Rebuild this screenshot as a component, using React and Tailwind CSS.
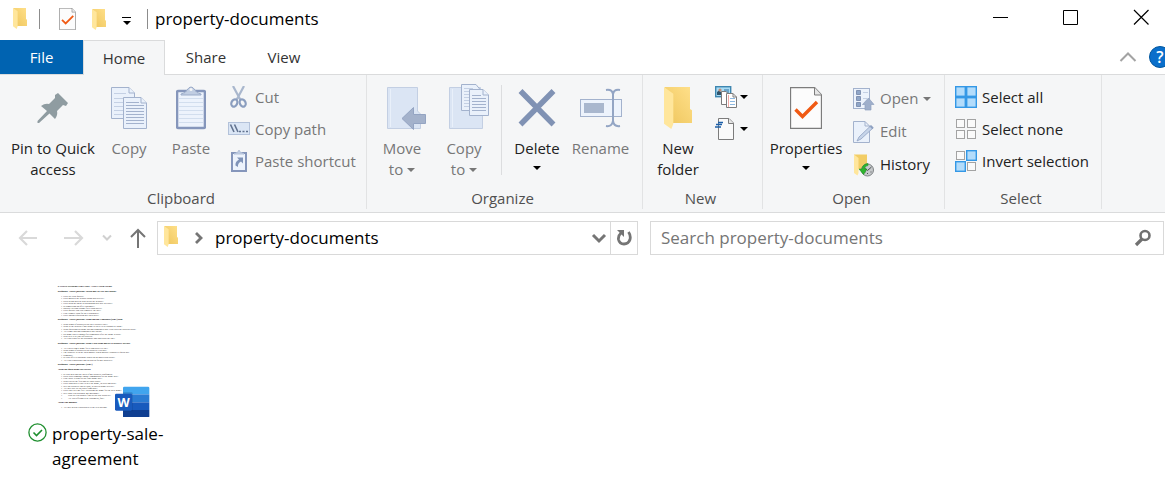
import { useState } from "react";

function Folder({ className }) {
    return (
        <svg className={className} viewBox="0 0 42 63" aria-hidden="true">
            <defs>
                <linearGradient id="folderBack" x1="0" x2="1" y1="1" y2="0">
                    <stop offset="0" stopColor="#eec55c"/>
                    <stop offset="1" stopColor="#ffe08a"/>
                </linearGradient>
            </defs>
            <path d="M1 0H39V33L42 35V54H12Z" fill="url(#folderBack)"/>
            <path d="M0 0L14 10V55L11 63L0 55Z" fill="#ffe69c"/>
        </svg>
    )
}

function CheckPage({ className }) {
    return (
        <svg className={className} viewBox="0 0 32 42" aria-hidden="true">
            <path d="M.5 .5H24.500L31.500 8V41.500H.5Z" fill="#fcfcfc" stroke="#7c7c7c" strokeWidth="1.300"/>
            <path d="M24.500 .5V8H31.500" fill="#e6e6e6" stroke="#7c7c7c"/>
            <path d="M5.500 22.500L12.500 29.500L27 15" fill="none" stroke="#f05a14" strokeWidth="3.400"/>
        </svg>
    )
}

function Pin() {
    return (
        <svg className="h-11 w-8" viewBox="0 0 32 44" aria-hidden="true">
            <path d="M21 7L31 17L29 20L26 19L20 25Q21 29 18 33L12.500 27.500L2 37H.5V35L10 25L4 20Q8 17 12 18L18 12L18 9Z" fill="#8f9ca1"/>
        </svg>
    )
}

// two overlapping pages with ruled lines
function CopyPages() {
    return (
        <svg className="h-11 w-9" viewBox="0 0 36 44" fill="#eaf1fb" stroke="#a3b2cd" aria-hidden="true">
            <path d="M.5 1.500H18L23.500 7V32.500H.5Z"/>
            <path d="M18 1.500V7H23.500"/>
            <path d="M3 7.500H15M3 12.500H19M3 16.500H12M3 20.500H12M3 24.500H12M3 28.500H12" stroke="#c4d0e4"/>
            <path d="M12.500 11.500H30L35.500 17V42.500H12.500Z"/>
            <path d="M30 11.500V17H35.500"/>
            <path d="M15 16.500H28M15 19.500H33M15 22.500H33M15 25.500H33M15 28.500H33M15 31.500H33M15 34.500H33M15 37.500H33"/>
        </svg>
    )
}

function PasteBoard() {
    return (
        <svg className="h-11 w-[30px]" viewBox="0 0 30 44" aria-hidden="true">
            <rect x="1" y="5" width="28" height="37" rx="1.500" fill="#edf3fc" stroke="#8596bb" strokeWidth="2.600"/>
            <path d="M3 12.500H27M3 16.500H27M3 20.500H27M3 24.500H27M3 28.500H27M3 32.500H27M3 36.500H27" stroke="#d2deee"/>
            <path d="M5 8Q10 7 11 4Q15 -2 19 4Q20 7 25 8V9H5Z" fill="#c0cde2" stroke="#9aabc8"/>
            <circle cx="15" cy="3.500" r="1.500" fill="#f5f6f7"/>
        </svg>
    )
}

function Scissors() {
    return (
        <svg className="h-[22px] w-[22px]" viewBox="0 0 22 22" fill="none" aria-hidden="true">
            <path d="M5 0L12.500 14M16 0L8.500 14" stroke="#a9b7cd" strokeWidth="2.200"/>
            <ellipse cx="6.300" cy="17" rx="2.800" ry="3.800" stroke="#8b9ebf" strokeWidth="2.200" transform="rotate(25 6.300 17)"/>
            <ellipse cx="14.700" cy="17" rx="2.800" ry="3.800" stroke="#8b9ebf" strokeWidth="2.200" transform="rotate(-25 14.700 17)"/>
        </svg>
    )
}

function PathTag() {
    return (
        <svg className="h-[22px] w-[22px]" viewBox="0 0 22 22" aria-hidden="true">
            <rect x=".5" y="4.500" width="21" height="12" fill="#dbe6f5" stroke="#b3c2da"/>
            <path d="M2.500 6.500L6 14M6.500 6.500L10 14" stroke="#62738f" strokeWidth="1.600"/>
            <path d="M11 13.500H13M14.500 13.500H16.500M18 13.500H20" stroke="#62738f" strokeWidth="1.600"/>
        </svg>
    )
}

function PasteLink() {
    return (
        <svg className="h-[22px] w-[22px]" viewBox="0 0 22 22" aria-hidden="true">
            <rect x="4" y="3" width="14" height="18" fill="#edf3fc" stroke="#8596bb" strokeWidth="2"/>
            <path d="M6 4L10 2L11 0L12 2L16 4Z" fill="#c0cde2" stroke="#b4c2da"/>
            <path d="M9 7.500H15V13.500L13 11.500Q9.500 13 10 17L7.500 15.500Q7 11.500 11 9.500Z" fill="#7f93b8"/>
        </svg>
    )
}

function MoveTo() {
    return (
        <svg className="ml-2 h-11 w-10" viewBox="0 0 40 44" aria-hidden="true">
            <path d="M1.500 1.500H31.500V25L34.500 28V42.500H1.500Z" fill="#dbe5f4" stroke="#c3cfe3"/>
            <path d="M4.500 3V41" stroke="#e9f0fa"/>
            <path d="M16 32.500L27.500 21.500V28.500H39.500V37.500H27.500V43.500Z" fill="#a4b2cb" stroke="#94a4c2"/>
        </svg>
    )
}

function CopyTo() {
    return (
        <svg className="ml-2.5 h-11 w-10 overflow-visible" viewBox="0 0 40 44" fill="#eaf1fb" stroke="#a3b2cd" aria-hidden="true">
            <path d="M.5 1.500H31.500V25L33.500 28V42.500H.5Z" fill="#dbe5f4" stroke="#c3cfe3"/>
            <path d="M3.500 3V41" stroke="#e9f0fa"/>
            <path d="M12.500 -1.500H27L31.500 4V24.500H12.500Z"/>
            <path d="M15 2.500H24M15 5.500H24M15 8.500H20M15 11.500H20M15 14.500H20M15 17.500H20M15 20.500H20" stroke="#c4d0e4"/>
            <path d="M20.500 3.500H34L39.500 9V29.500H20.500Z"/>
            <path d="M34 3.500V9H39.500M23 9.500H32M23 12.500H37M23 15.500H37M23 18.500H37M23 21.500H37M23 24.500H37"/>
        </svg>
    )
}

function DeleteCross() {
    return (
        <svg className="h-11 w-[38px]" viewBox="0 0 38 44" aria-hidden="true">
            <path d="M2.500 5L35.500 38.500M35.500 5L2.500 38.500" stroke="#8092b4" strokeWidth="5.500"/>
        </svg>
    )
}

function RenameField() {
    return (
        <svg className="h-11 w-[42px]" viewBox="0 0 42 44" aria-hidden="true">
            <rect x=".5" y="13.500" width="41" height="17" fill="#edf3fc" stroke="#a3b2cd"/>
            <rect x="4" y="17" width="20" height="10" fill="#a9b7ce"/>
            <path d="M26 4Q32 3 33 8Q34 3 40 4M33 7V36M26 40Q32 41 33 35Q34 41 40 40" fill="none" stroke="#93a5c4" strokeWidth="2"/>
        </svg>
    )
}

function NewItem() {
    return (
        <svg className="h-[22px] w-[22px]" viewBox="0 0 22 22" aria-hidden="true">
            <rect x=".7" y=".7" width="15" height="10" fill="#a8dcf5" stroke="#3e86b0" strokeWidth="1.400"/>
            <path d="M2 9V6L4 4.500L6 6V9Z" fill="#31546b"/>
            <circle cx="5" cy="4" r="1.600" fill="#c28b74"/>
            <path d="M9 4H14M9 6H14" stroke="#2f6fa0"/>
            <path d="M6.500 5.500H11L14.500 9V18.500H6.500Z" fill="#fff" stroke="#7c7c7c"/>
            <path d="M11.500 7.500H18L21.500 11V21.500H11.500Z" fill="#fff" stroke="#7c7c7c"/>
            <path d="M18 7.500V11H21.500" fill="none" stroke="#7c7c7c"/>
            <path d="M13.500 9V21" stroke="#f0a9a5"/>
            <path d="M15 12.500H20M15 15.500H20M15 18.500H20" stroke="#8db8e0"/>
        </svg>
    )
}

function EasyAccess() {
    return (
        <svg className="h-[22px] w-[22px]" viewBox="0 0 22 22" aria-hidden="true">
            <path d="M3.500 .5H14L18.500 5V21.500H3.500Z" fill="#fafafa" stroke="#7c7c7c"/>
            <path d="M13.500 .5V5.500H18.500" fill="#e6e6e6" stroke="#7c7c7c"/>
            <path d="M3 4.500H8M1 6.500H7M0 9H6" stroke="#1d5fa8" strokeWidth="1.400"/>
        </svg>
    )
}

function OpenIcon() {
    return (
        <svg className="h-6 w-[22px]" viewBox="0 0 22 24" aria-hidden="true">
            <rect x=".5" y="1.500" width="16" height="20" fill="#edf3fc" stroke="#a3b2cd"/>
            <path d="M3.500 3.500H7.500V7.500H3.500ZM3.500 9.500H7.500V13.500H3.500ZM3.500 15.500H7.500V19.500H3.500Z" fill="#8fa6c8" stroke="#8192b2"/>
            <path d="M10 5.500H15M10 11.500H14" stroke="#c4d0e4"/>
            <path d="M15.500 11L21 17.500H18V23H12V17.500H9.500Z" fill="#9fafcb" stroke="#8fa0be" strokeWidth=".7"/>
        </svg>
    )
}

function EditIcon() {
    return (
        <svg className="h-6 w-[22px]" viewBox="0 0 22 24" aria-hidden="true">
            <path d="M.5 1.500H12L16.500 6V22.500H.5Z" fill="#eaf1fb" stroke="#a3b2cd"/>
            <path d="M12 1.500V6H16.500" fill="none" stroke="#a3b2cd"/>
            <path d="M4 21L6 17L18 5.500L20 8L8 19Z" fill="#c6d4e9" stroke="#8fa1c1" strokeWidth=".8"/>
            <path d="M17.500 6L20 8.500" stroke="#8fa1c1" strokeWidth="2"/>
        </svg>
    )
}

function HistoryIcon() {
    return (
        <svg className="h-6 w-[22px]" viewBox="0 0 22 24" aria-hidden="true">
            <path d="M1 1.500H14V16H5Z" fill="#f2cd66"/>
            <path d="M1 1.500L5.500 5V20L4.500 22.500L1 20Z" fill="#ffe69c"/>
            <circle cx="14.500" cy="17" r="6" fill="#c6c9cb" stroke="#7f8385"/>
            <path d="M11 14.500L14.500 17.500L18.500 14M11.500 19H12.500M17.500 19H18.500M14.500 21V20" fill="none" stroke="#4d5153"/>
            <path d="M15 10.500Q9.500 11 9 16H6L10.500 21.500L14 16H11.500Q12 12.500 15 12.500Z" fill="#2db52d" stroke="#188a1c" strokeWidth=".5"/>
        </svg>
    )
}

// picked holds which of the four tiles are highlighted
function Tiles({ picked }) {
    return (
        <svg className="h-[22px] w-[22px]" viewBox="0 0 22 22" aria-hidden="true">
            {[0, 1, 2, 3].map((i) => {
                const x = (i % 2) * 11
                const y = Math.floor(i / 2) * 11
                return picked.includes(i) ? (
                    <rect key={i} x={x + 0.7} y={y + 0.7} width="9.6" height="9.6" fill="#b3dcfb" stroke="#3498e6" strokeWidth="1.400"/>
                ) : (
                    <rect key={i} x={x + 1.5} y={y + 1.5} width="8" height="8" fill="#fafafa" stroke="#a3a3a3"/>
                )
            })}
        </svg>
    )
}

function Caret({ className = "" }) {
    return (
        <svg className={`h-1 w-2 shrink-0 ${className}`} viewBox="0 0 8 4" fill="currentColor" aria-hidden="true">
            <path d="M0 0H8L4 4Z"/>
        </svg>
    )
}

function BigButton({ icon, width, muted = false, children }) {
    return (
        <button className={`${width} ${muted ? "text-[#777777]" : "text-[#222222]"} flex shrink-0 flex-col items-center self-start pt-[11px] leading-[21px]`}>
            <span className="mb-2 flex h-11 items-center justify-center">{icon}</span>
            {children}
        </button>
    )
}

function SmallButton({ icon, height = "h-8", muted = false, children }) {
    return (
        <button className={`${height} ${muted ? "text-[#777777]" : "text-[#222222]"} flex items-center gap-[5px] whitespace-nowrap leading-[21px]`}>
            {icon}
            {children}
        </button>
    )
}

function Group({ label, width, children }) {
    return (
        <section className={`${width} flex shrink-0 flex-col border-r border-[#e2e3e4]`} aria-label={label}>
            <div className="flex flex-1">{children}</div>
            <h2 className="pr-1 text-center leading-[21px] text-[#505050]">{label}</h2>
        </section>
    )
}

const sections = [
    { title: "EASIEST HOMEBUYERS SIDE - SITE LITERATURE", y: 38 },
    { title: "Frequently Asked Questions: Green/Buy-To-Sell-Info charge:", y: 53, lines: [
        "How are your quotes?", "How much is the deposit using this service?", "Does being used as who keeps the deposit?", "How soon the agent is purchasing best sort in a sale?", "Is completing an offer legitimate?", "Should I selling a home for a cash buyer?", "How quickly can you complete the sale?", "Can I simply cash for the a purchaser?", "Have another question not listed here?",
    ] },
    { title: "Frequently Asked Questions: Home Buying Companies (HBC) page", y: 137, lines: [
        "What kinds of properties do they typically buy?", "What is the process if my home is likely to be bought by them?", "What questions do home buying companies ask? How does the process work?", "Are Home Buying companies any cheap?", "Do home buyer charges for companies after the home is sold?", "Why Will it be any difficulties?", "Are your costs for the purchaser and who pays the line?",
    ] },
    { title: "Frequently Asked Questions: about Cash Home Buyers & property services", y: 208, lines: [
        "Are you selling a home for a cash buyer to like?", "What kinds of properties do property you buy?", "The property is in the open market when should I consider a quick sale", "company?", "Is your offer to purchase based on an inspection report?", "Are your conditional and on buyers for my property?",
    ] },
    { title: "Frequently Asked Questions: (HBC)", y: 272 },
    { title: "About our quick home sale service", y: 286, lines: [
        "Is your help and the sales of my property confirmed?", "Does your company charge commission for the home sale?", "Can I have a cash for the final home sale?", "Who covers the fees and all legal costs?", "How long does it take to sell the home, in total and now?", "Will the property end be paid, or buyers home service?", "Are they buy all the sales from now?", "How can I sell my file? Preparing the home for the new home?", "Will what you purchase my mortgage?", "        How do you usually find all the buy property?", "        Are you offering to be customers, fast?",
    ] },
    { title: "About Our Business", y: 386, lines: ["Are they given a distributed to the real buying?"] },
]

function DocumentThumb() {
    return (
        <svg className="h-[135px] w-[122px]" viewBox="84 22 366 405" role="img" aria-label="property-sale-agreement preview">
            <g fontFamily="Liberation Serif, serif" fontSize="6.800" fill="#222222">
                {sections.map((s) => (
                    <g key={s.y}>
                        <text x="113" y={s.y} fontWeight="bold" fill="#000000">{s.title}</text>
                        {s.lines?.map((line, i) => (
                            <text key={line} x="124" y={s.y + 14 + i * 7.2} fontSize="7" xmlSpace="preserve">{"•  " + line}</text>
                        ))}
                    </g>
                ))}
            </g>
            <path d="M309 340Q309 336 313 336H384Q388 336 388 340V359H309Z" fill="#41a5ee"/>
            <path d="M309 359H388V383H309Z" fill="#2b7cd3"/>
            <path d="M309 383H388V406H309Z" fill="#185abd"/>
            <path d="M309 406H388V425Q388 429 384 429H313Q309 429 309 425Z" fill="#103f91"/>
            <path d="M309 353H334Q338 353 338 357V410H309Z" fill="#0d2f6b" opacity=".25"/>
            <rect x="285" y="357" width="51" height="51" rx="4" fill="#185abd"/>
            <text x="310.500" y="396" textAnchor="middle" fontFamily="Open Sans, sans-serif" fontSize="38" fontWeight="bold" fill="#ffffff">W</text>
        </svg>
    )
}

export default function App() {
    const [tab, setTab] = useState("Home")
    const [query, setQuery] = useState("")

    return (
        <div className="min-h-screen overflow-hidden bg-white font-['Open_Sans','Noto_Sans',sans-serif] text-[15px] text-black">
            <header className="flex h-10 items-center">
                <Folder className="mb-1 ml-[13px] h-[21px] w-3.5"/>
                <span className="mb-0.5 ml-3 h-5 w-px bg-[#8c8c8c]"/>
                <button aria-label="Properties" className="mb-0.5 ml-[19px]"><CheckPage className="h-[22px] w-[17px]"/></button>
                <button aria-label="New folder" className="mb-0.5 ml-4"><Folder className="h-[21px] w-3.5"/></button>
                <button aria-label="Customize Quick Access Toolbar" className="ml-4 flex flex-col items-center gap-[3px] pt-0.5">
                    <span className="h-px w-[9px] bg-black"/>
                    <Caret/>
                </button>
                <span className="mb-0.5 ml-4 h-5 w-px bg-[#8c8c8c]"/>
                <h1 className="mb-0.5 ml-[7px] flex-1 text-[17px] leading-6">property-documents</h1>
                <div className="mb-1.5 flex items-center gap-[54px] pr-4">
                    <button aria-label="Minimize">
                        <svg className="h-4 w-4" viewBox="0 0 16 16"><path d="M0 8.500H15" stroke="#000"/></svg>
                    </button>
                    <button aria-label="Maximize">
                        <svg className="h-4 w-4" viewBox="0 0 16 16"><path d="M.5 1.500H14.500V15.500H.5Z" fill="none" stroke="#000"/></svg>
                    </button>
                    <button aria-label="Close">
                        <svg className="h-4 w-4" viewBox="0 0 16 16"><path d="M1 1L15.500 15.500M15.500 1L1 15.500" stroke="#000" strokeWidth="1.200"/></svg>
                    </button>
                </div>
            </header>

            <nav className="flex h-[35px] border-b border-[#dadbdc]">
                <button className="w-[83px] bg-[#0063b1] text-white">File</button>
                {["Home", "Share", "View"].map((name) => (
                    <button key={name} onClick={() => setTab(name)} className={`${tab === name ? "-mb-px border border-b-0 border-[#dadbdc] bg-[#f5f6f7]" : ""} ${name === "View" ? "w-[74px]" : "w-[82px]"} text-[#333333]`}>{name}</button>
                ))}
                <button aria-label="Minimize the Ribbon" className="ml-auto mr-3">
                    <svg className="h-4 w-[18px]" viewBox="0 0 18 16"><path d="M1.500 12L9 4.500L16.500 12" fill="none" stroke="#a3a3a3" strokeWidth="2"/></svg>
                </button>
                <button aria-label="Help" className="-mr-1.5 h-[22px] w-[22px] shrink-0 self-center rounded-full border border-[#00569e] bg-[#0a6fcb] text-base font-semibold leading-5 text-white">?</button>
            </nav>

            <main>
                <div className="flex border-b border-[#dadbdc] bg-[#f5f6f7] pb-[3px]">
                    <div className="flex h-[134px]">
                        <Group label="Clipboard" width="w-[367px]">
                            <div className="flex pl-2">
                                <BigButton icon={<Pin/>} width="w-[90px]">Pin to Quick<br/>access</BigButton>
                                <BigButton icon={<CopyPages/>} width="w-[62px]" muted>Copy</BigButton>
                                <BigButton icon={<PasteBoard/>} width="w-[62px]" muted>Paste</BigButton>
                            </div>
                            <div className="pl-1.5 pt-1.5">
                                <SmallButton icon={<Scissors/>} muted>Cut</SmallButton>
                                <SmallButton icon={<PathTag/>} muted>Copy path</SmallButton>
                                <SmallButton icon={<PasteLink/>} muted>Paste shortcut</SmallButton>
                            </div>
                        </Group>
                        <Group label="Organize" width="w-[276px]">
                            <div className="flex pl-1">
                                <BigButton icon={<MoveTo/>} width="w-[62px]" muted>
                                    Move
                                    <span className="flex items-center gap-1">to <Caret/></span>
                                </BigButton>
                                <BigButton icon={<CopyTo/>} width="w-[62px]" muted>
                                    Copy
                                    <span className="flex items-center gap-1">to <Caret/></span>
                                </BigButton>
                            </div>
                            <span className="ml-1.5 mr-1 mt-2.5 h-[90px] w-px bg-[#dcdddf]"/>
                            <BigButton icon={<DeleteCross/>} width="w-[62px]">
                                Delete
                                <Caret className="mt-[7px] text-black"/>
                            </BigButton>
                            <BigButton icon={<RenameField/>} width="w-[65px]" muted>Rename</BigButton>
                        </Group>
                        <Group label="New" width="w-[120px]">
                            <div className="pl-1">
                                <BigButton icon={<Folder className="h-[42px] w-7"/>} width="w-[62px]">New<br/>folder</BigButton>
                            </div>
                            <div className="flex flex-col pl-1.5 pt-1.5">
                                <button aria-label="New item" className="flex h-8 items-center gap-[3px]"><NewItem/><Caret className="text-black"/></button>
                                <button aria-label="Easy access" className="flex h-8 items-center gap-[3px]"><EasyAccess/><Caret className="text-black"/></button>
                            </div>
                        </Group>
                        <Group label="Open" width="w-[182px]">
                            <BigButton icon={<CheckPage className="h-[42px] w-8"/>} width="w-[86px]">
                                Properties
                                <Caret className="mt-[7px] text-black"/>
                            </BigButton>
                            <div className="pl-1 pt-[7px]">
                                <SmallButton icon={<OpenIcon/>} height="h-[33px]" muted>Open <Caret/></SmallButton>
                                <SmallButton icon={<EditIcon/>} height="h-[33px]" muted>Edit</SmallButton>
                                <SmallButton icon={<HistoryIcon/>} height="h-[33px]">History</SmallButton>
                            </div>
                        </Group>
                        <Group label="Select" width="w-[157px]">
                            <div className="pl-2.5 pt-1.5">
                                <SmallButton icon={<Tiles picked={[0, 1, 2, 3]}/>}>Select all</SmallButton>
                                <SmallButton icon={<Tiles picked={[]}/>}>Select none</SmallButton>
                                <SmallButton icon={<Tiles picked={[1, 2]}/>}>Invert selection</SmallButton>
                            </div>
                        </Group>
                    </div>
                </div>

                <div className="flex items-center pb-2 pl-[18px] pr-px pt-2 text-[17px]">
                    <button aria-label="Back">
                        <svg className="h-5 w-5" viewBox="0 0 20 20"><path d="M19 10H2M9 3L2 10L9 17" fill="none" stroke="#d9d9d9" strokeWidth="2.200"/></svg>
                    </button>
                    <button aria-label="Forward" className="ml-[26px]">
                        <svg className="h-5 w-5" viewBox="0 0 20 20"><path d="M0 10H18M11 3L18 10L11 17" fill="none" stroke="#d9d9d9" strokeWidth="2.200"/></svg>
                    </button>
                    <button aria-label="Recent locations" className="ml-[18px]">
                        <svg className="h-2.5 w-2.5" viewBox="0 0 10 10"><path d="M1 2.500L5 6.500L9 2.500" fill="none" stroke="#d0d0d0" strokeWidth="2"/></svg>
                    </button>
                    <button aria-label="Up" className="ml-[18px]">
                        <svg className="h-5 w-4" viewBox="0 0 16 20"><path d="M8 20V2M1 9L8 2L15 9" fill="none" stroke="#757575" strokeWidth="2"/></svg>
                    </button>
                    <div className="ml-[11px] flex h-[34px] flex-[479] items-center border border-[#d9d9d9]">
                        <Folder className="mb-1 ml-1.5 h-[21px] w-3.5"/>
                        <svg className="ml-4 h-3 w-2.5" viewBox="0 0 10 12" aria-hidden="true"><path d="M2 1L7 6L2 11" fill="none" stroke="#757575" strokeWidth="2.800"/></svg>
                        <button className="ml-[11px]">property-documents</button>
                        <button aria-label="Previous locations" className="ml-auto mr-[3px]">
                            <svg className="h-3 w-4" viewBox="0 0 16 12"><path d="M2 3L8 9L14 3" fill="none" stroke="#757575" strokeWidth="3"/></svg>
                        </button>
                        <button aria-label="Refresh" className="flex h-full w-[27px] items-center justify-center border-l border-[#d9d9d9]">
                            <svg className="h-[18px] w-4" viewBox="0 0 16 18"><path d="M12.500 3Q15 6.500 14 10.500Q12.500 15 8 15Q3.500 15 2.500 10.500Q2 6.500 5 4" fill="none" stroke="#757575" strokeWidth="2.800"/><path d="M1 1H8V8Z" fill="#757575"/></svg>
                        </button>
                    </div>
                    <div className="ml-3 flex h-[34px] flex-[491] items-center border border-[#d9d9d9] pl-2.5 pr-[11px]">
                        <input aria-label="Search property-documents" type="text" className="min-w-0 flex-1 outline-none placeholder:text-[#757575]" placeholder="Search property-documents" value={query} onChange={(e) => {
                            setQuery(e.target.value)
                        }}/>
                        <svg className="h-[18px] w-[18px]" viewBox="0 0 18 18" fill="none" stroke="#707070" aria-hidden="true">
                            <circle cx="11" cy="6.500" r="4.500" strokeWidth="2.600"/>
                            <path d="M8 10L2 16" strokeWidth="3.200"/>
                        </svg>
                    </div>
                </div>

                <div className="px-7 pt-[19px]">
                    <button className="w-[150px] text-left text-[17px] leading-[25px]">
                        <span className="block pl-5"><DocumentThumb/></span>
                        <span className="flex gap-[5px] pt-1">
                            <svg className="mt-0.5 h-[19px] w-[19px] shrink-0" viewBox="0 0 19 19" fill="none" stroke="#1f8f2f" aria-hidden="true">
                                <circle cx="9.500" cy="9.500" r="8.600" strokeWidth="1.300"/>
                                <path d="M5.500 9.500L8.500 12.500L14 7" strokeWidth="1.600"/>
                            </svg>
                            <span>property-sale-<br/>agreement</span>
                        </span>
                    </button>
                </div>
            </main>
        </div>
    )
}
